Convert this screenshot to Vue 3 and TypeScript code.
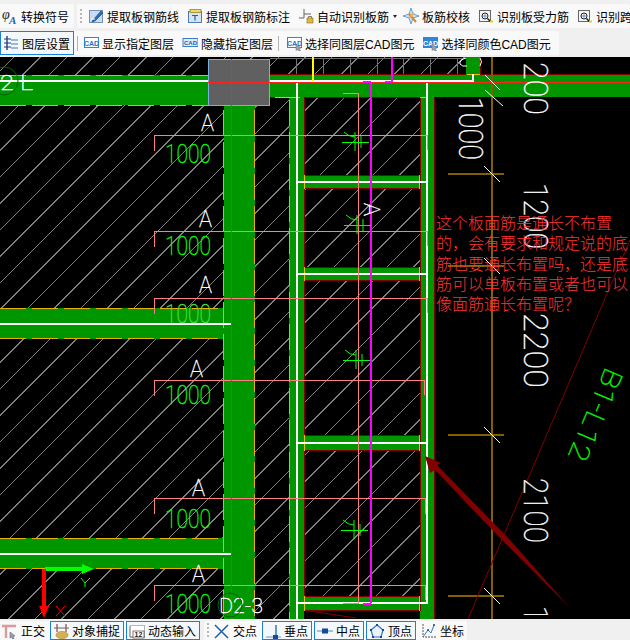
<script setup lang="ts">
interface ToolItem {
  icon: string
  label: string
  active?: boolean
  caret?: boolean
}

const cadBox = (fill: string, color: string) =>
  `<rect x="1.5" y="2.5" width="14" height="10" fill="${fill}" stroke="#2f86d8"/><text x="8.5" y="10.5" text-anchor="middle" font-size="7" font-weight="700" font-family="Liberation Sans" fill="${color}">CAD</text>`
const cursor = '<path d="M10 9l5 4-2 .5 1.5 2.5-1.5.7-1.2-2.5-1.8 1.3z" fill="#9aa4b2" stroke="#667"  stroke-width=".5"/>'
const lens =
  '<rect x="1.5" y="2.5" width="11" height="11" fill="#f4f4f4" stroke="#666"/><circle cx="7" cy="8" r="3" fill="#fff" stroke="#222"/><path d="M9.5 10.5l3 3" stroke="#222" stroke-width="1.5"/><path d="M7 5v6M4 8h6" stroke="#3a6ea8" stroke-width=".7"/><path d="M12 13.5h3" stroke="#e8d020" stroke-width="2"/>'

const icons: Record<string, string> = {
  symbol:
    '<text x="0" y="11" font-size="14" font-style="italic" font-family="Liberation Serif" fill="#222">φ</text><text x="7" y="15.5" font-size="11" font-weight="700" font-style="italic" font-family="Liberation Serif" fill="#2a62b8">A</text>',
  line: '<rect x="1.5" y="2.5" width="13" height="12" fill="#c9dcf0" stroke="#6f93bb"/><path d="M5 12l8-9 2 2-8 8-3 1z" fill="#2c6db5" stroke="#163f78" stroke-width=".6"/><path d="M3 11h4" stroke="#fff"/>',
  label:
    '<rect x="1.5" y="3.5" width="13" height="11" fill="#d6e4f3" stroke="#4c7bb0"/><rect x="3" y="1.5" width="11" height="3" fill="#f0d860" stroke="#8a7a20" stroke-width=".7"/><path d="M5 7.5h6M8 7.5v5" stroke="#2c5f9e" stroke-width="1.2"/>',
  auto: '<path d="M6 1v9H1M6 6h7" fill="none" stroke="#666"/><rect x="9" y="10" width="6" height="5" fill="#e0b840" stroke="#8a6a10" stroke-width=".6"/><path d="M10.5 10V8.5h3V10" fill="none" stroke="#777"/>',
  check:
    '<path d="M8 0l2 6 6 2-6 2-2 6-2-6-6-2 6-2z" fill="#cfe2f6" stroke="#3f7fc4" stroke-width=".7"/><path d="M6 6l7 8" stroke="#d88a20" stroke-width="2"/><path d="M11 5l-5 5" stroke="#e8b050" stroke-width="2"/>',
  lens,
  layer:
    '<path d="M4 1v14" stroke="#1f3f7a" stroke-width="1.4"/><path d="M1 4h7M1 8h7M1 12h7" stroke="#1f3f7a" stroke-width="1.2"/><path d="M8 5h7M8 9h7M8 13h7" stroke="#3a78c8"/>',
  cadShow: cadBox('#fff', '#2376c8'),
  cadHide:
    '<rect x="1" y="3.5" width="15" height="8" fill="#dfe9f5" stroke="#3d7fc2"/><text x="8.5" y="10" text-anchor="middle" font-size="6" font-weight="700" font-family="Liberation Sans" fill="#2a5f9f">CAD</text>',
  cadPick: cadBox('#fff', '#2376c8') + cursor,
  cadColor: cadBox('#2f86d8', '#fff') + cursor,
  ortho:
    '<path d="M1 3h14M5 3v12" stroke="#d89a9a" stroke-width="2.4" fill="none"/><path d="M9 9l5 4-2 .5 1 2.2-1.4.4-1-2.2-1.6 1.2z" fill="#9aa4b2" stroke="#556" stroke-width=".5"/>',
  snap: '<path d="M4 1v8M13 1v8" stroke="#a04040" stroke-width="1.2"/><path d="M1 5h15" stroke="#666"/><ellipse cx="9" cy="12" rx="6" ry="3.6" fill="#d8b050" stroke="#a88020" stroke-width=".6"/>',
  dyn: '<path d="M1 3h15M1 6h15" stroke="#b06060"/><path d="M1 3v11h15V3" fill="#fff" stroke="#666"/><rect x="4" y="8" width="11" height="7" fill="#fff" stroke="#444" stroke-width=".7"/><text x="9.5" y="14" text-anchor="middle" font-size="7" font-family="Liberation Sans" font-weight="700" fill="#222">12</text>',
  cross: '<path d="M2 2l13 13M15 2L2 15" stroke="#1f5fb0" stroke-width="1.5"/>',
  perp: '<path d="M11 2v13" stroke="#2c6db5" stroke-width="1.4"/><path d="M1 14h15" stroke="#8fb0d8" stroke-width="1.4"/><rect x="8" y="12" width="5" height="4" fill="#174a96"/>',
  mid: '<path d="M0 8h16" stroke="#8fb0d8" stroke-width="1.6"/><rect x="5" y="5.5" width="6" height="5" fill="#174a96"/>',
  vertex:
    '<path d="M8 2l6 5-2 7H4L2 7z" fill="#eaf2fb" stroke="#3a72b8" stroke-width="1.2"/><path d="M7 1h2v2H7zM1 6h2v2H1zM13 6h2v2h-2zM3 13h2v2H3zM11 13h2v2h-2z" fill="#174a96"/>',
  coord:
    '<path d="M3 1v13h13" fill="none" stroke="#555" stroke-dasharray="2 1"/><path d="M3 14l5-7 3 3 3-8" fill="none" stroke="#3a78c8"/><circle cx="8" cy="7" r="1" fill="#174a96"/><circle cx="14" cy="2" r="1" fill="#174a96"/>'
}

const rowOneLead: ToolItem = { icon: 'symbol', label: '转换符号' }
const rowOne: ToolItem[] = [
  { icon: 'line', label: '提取板钢筋线' },
  { icon: 'label', label: '提取板钢筋标注' },
  { icon: 'auto', label: '自动识别板筋', caret: true },
  { icon: 'check', label: '板筋校核' },
  { icon: 'lens', label: '识别板受力筋' },
  { icon: 'lens', label: '识别跨板受力筋' }
]
const rowTwoA: ToolItem = { icon: 'layer', label: '图层设置', active: true }
const rowTwoB: ToolItem[] = [
  { icon: 'cadShow', label: '显示指定图层' },
  { icon: 'cadHide', label: '隐藏指定图层' }
]
const rowTwoC: ToolItem[] = [
  { icon: 'cadPick', label: '选择同图层CAD图元' },
  { icon: 'cadColor', label: '选择同颜色CAD图元' }
]
const statusA: ToolItem[] = [
  { icon: 'ortho', label: '正交' },
  { icon: 'snap', label: '对象捕捉', active: true },
  { icon: 'dyn', label: '动态输入', active: true }
]
const statusB: ToolItem[] = [
  { icon: 'cross', label: '交点' },
  { icon: 'perp', label: '垂点', active: true },
  { icon: 'mid', label: '中点', active: true },
  { icon: 'vertex', label: '顶点', active: true },
  { icon: 'coord', label: '坐标' }
]

// drawing data, coordinates are the same as the screen ones
const crossBeams = [
  { top: 175, white: 182, bottom: 189 },
  { top: 267, white: 274, bottom: 281 },
  { top: 435, white: 443, bottom: 451 },
  { top: 596, white: 603, bottom: 611 }
]
const leftBeams = [
  { top: 308, white: 324, bottom: 339 },
  { top: 538, white: 554, bottom: 569 }
]
const leaders = [
  { y: 135, right: 427, rightTick: 15 },
  { y: 231, right: 427, rightTick: 15 },
  { y: 298, right: 427, rightTick: 15 },
  { y: 380, right: 424, rightTick: 15 },
  { y: 498, right: 425, rightTick: 16 },
  { y: 585, right: 425, rightTick: 15 }
]
const marks = [
  { a: 201, y: 131, n: 163, light: false },
  { a: 199, y: 227, n: 255, light: false },
  { a: 199, y: 293, n: 323, light: true },
  { a: 190, y: 377, n: 404, light: false },
  { a: 192, y: 496, n: 528, light: false },
  { a: 192, y: 582, n: 613, light: false }
]
const rebars = [
  { x: 342, y: 142 },
  { x: 344, y: 225 },
  { x: 343, y: 360 },
  { x: 341, y: 530 }
]
const axisTicks = [174, 266, 435, 596]
const dims = [
  { text: '200', y: 62, len: 53 },
  { text: '1000', y: 97, len: 63, x: 459 },
  { text: '1200', y: 183, len: 66 },
  { text: '2200', y: 313, len: 75 },
  { text: '2100', y: 478, len: 65 },
  { text: '1', y: 606, len: 15 }
]
const note = [
  '这个板面筋是通长不布置',
  '的，会有要求和规定说的底',
  '筋也要通长布置吗，还是底',
  '筋可以单板布置或者也可以',
  '像面筋通长布置呢？'
]

// 45 degree hatch lines, clipped to the slab area in the template
let hatchPath = ''
for (let k = 18; k < 1200; k += 26.5) {
  hatchPath += `M0 ${k}L${k} 0`
}
</script>

<template>
  <div class="app">
    <div class="toolbar">
      <div class="group lead">
        <div class="item">
          <svg class="icon" viewBox="0 0 16 16" v-html="icons[rowOneLead.icon]"></svg>
          <span>{{ rowOneLead.label }}</span>
        </div>
      </div>
      <div class="group wide">
        <i class="grip"></i>
        <div v-for="it in rowOne" :key="it.label" class="item">
          <svg class="icon" viewBox="0 0 16 16" v-html="icons[it.icon]"></svg>
          <span>{{ it.label }}</span>
          <b v-if="it.caret" class="caret"></b>
        </div>
      </div>
    </div>

    <div class="toolbar second">
      <div class="group row-two">
        <div class="item on tight">
          <svg class="icon" viewBox="0 0 16 16" v-html="icons[rowTwoA.icon]"></svg>
          <span>{{ rowTwoA.label }}</span>
        </div>
        <i class="sep"></i>
        <div v-for="it in rowTwoB" :key="it.label" class="item">
          <svg class="icon" viewBox="0 0 16 16" v-html="icons[it.icon]"></svg>
          <span>{{ it.label }}</span>
        </div>
        <i class="sep wider"></i>
        <div v-for="it in rowTwoC" :key="it.label" class="item">
          <svg class="icon" viewBox="0 0 16 16" v-html="icons[it.icon]"></svg>
          <span>{{ it.label }}</span>
        </div>
      </div>
    </div>

    <div class="canvas">
      <svg class="cad" viewBox="0 57 630 562" width="630" height="562" shape-rendering="crispEdges">
        <defs>
          <clipPath id="slab">
            <rect x="0" y="57" width="434" height="562" />
            <rect x="434" y="57" width="32" height="18" />
          </clipPath>
        </defs>
        <rect x="0" y="57" width="630" height="562" fill="#000" />
        <path :d="hatchPath" clip-path="url(#slab)" stroke="#808080" fill="none" />
        <rect x="304" y="611" width="116" height="8" fill="#000" />

        <!-- grey column outlines in the top row -->
        <g fill="none" stroke="#707070">
          <path d="M270 58.5H466M296.5 58V75M323.5 58V75M350.5 58V75M377.5 58V75M403.5 58V75M430.5 58V75M457.5 58V75" />
        </g>

        <!-- beams -->
        <g fill="#009600">
          <rect x="0" y="75" width="208" height="30" />
          <rect x="270" y="75" width="360" height="22" />
          <rect x="224" y="105" width="31" height="514" />
          <rect x="289" y="97" width="15" height="522" />
          <rect x="420" y="97" width="14" height="522" />
          <rect x="466" y="57" width="14" height="18" />
          <rect v-for="b in crossBeams" :key="b.top" x="304" :y="b.top" width="116" :height="b.bottom - b.top" />
          <rect v-for="b in leftBeams" :key="b.top" x="0" :y="b.top" width="224" :height="b.bottom - b.top" />
        </g>

        <!-- dark red outlines -->
        <g fill="none" stroke="#800000">
          <path d="M254.5 59V74.5H466M480.5 57V74.5H630M270 97.5H289M304.5 97.5H420M304.5 97V611M420.5 97V611M434.5 97V619" />
          <path v-for="b in crossBeams" :key="b.top" :d="`M304 ${b.top + 0.5}H420M304 ${b.bottom - 0.5}H420`" />
          <path d="M310 611L356 618" shape-rendering="auto" />
        </g>

        <!-- orange dashed edges -->
        <g fill="none" stroke="#e8b000" stroke-dasharray="26 6">
          <path d="M0 75.5H208M0 105.5H208M223.5 110V619M254.5 110V619M289.5 100V619" />
          <path v-for="b in leftBeams" :key="b.top" :d="`M0 ${b.top + 0.5}H222M0 ${b.bottom - 0.5}H222`" />
        </g>
        <path d="M275 97.5H300M420 97.5H428M467 74.5H480" stroke="#e8c000" fill="none" />
        <g stroke="#e8c000" fill="none">
          <path v-for="b in crossBeams" :key="b.top" :d="`M304.5 ${b.top}V${b.bottom}M419.5 ${b.top}V${b.bottom}`" />
        </g>

        <!-- white centre lines -->
        <g fill="none" stroke="#fff" stroke-width="2">
          <path d="M0 81H208M270 81H474M473 74V82M297 83V619M427 83V604" />
          <path v-for="b in crossBeams" :key="b.top" :d="`M297 ${b.white}H427`" />
          <path v-for="b in leftBeams" :key="b.top" :d="`M0 ${b.white}H231`" />
        </g>
        <path d="M466 58Q459 60 460 64Q462 67 467 66M480 58Q483 61 480 66" fill="none" stroke="#fff" shape-rendering="auto" />

        <!-- pink leaders -->
        <g fill="none" stroke="#ff8080">
          <path d="M343 93.5H358.5V603.5M343 603.5H358" />
          <path v-for="l in leaders" :key="l.y" :d="`M154.5 ${l.y + 16}V${l.y + 0.5}H${l.right + 0.5}V${l.y + l.rightTick}`" />
        </g>

        <!-- grey column -->
        <rect x="208.5" y="59.5" width="61" height="46" fill="#606060" stroke="#7ab0e0" />
        <path d="M208 82H630M231.5 59V619" stroke="#ff2020" fill="none" />
        <path d="M312.5 57V81" stroke="#ffff00" stroke-width="2" />
        <path d="M392 57V82M371 82V603M363 81.5H371M385 81.5H392M363 603.5H371" stroke="#ff00ff" stroke-width="2" fill="none" />
        <path d="M505 81.5H521" stroke="#806000" />

        <!-- axis -->
        <path d="M491.5 57V619" stroke="#806000" stroke-width="2" />
        <g v-for="y in axisTicks" :key="y">
          <path :d="`M448 ${y}H504`" stroke="#806000" stroke-width="2" />
          <path :d="`M484 ${y - 8}L500 ${y + 8}`" stroke="#fff" shape-rendering="auto" />
        </g>
        <path d="M485 75L500 90M485 90L503 106" stroke="#fff" shape-rendering="auto" />
        <path d="M630 240L468 619" stroke="#800000" shape-rendering="auto" />

        <!-- rebar marks -->
        <g v-for="r in rebars" :key="r.y" :transform="`translate(${r.x},${r.y})`" fill="none" stroke="#00ff00" shape-rendering="auto">
          <path d="M0 .5H27M13 -10V9M19 -6V6M2 -10Q7 -5 13 -5" />
        </g>

        <!-- dimension and labels -->
        <g class="cad-text" shape-rendering="auto" stroke-width="0.4">
          <template v-for="m in marks" :key="m.y">
            <text :x="m.a" :y="m.y" font-size="24" fill="#fff" stroke="#fff" textLength="13" lengthAdjust="spacingAndGlyphs">A</text>
            <text x="165" :y="m.n" font-size="25" :fill="m.light ? '#40e040' : '#00ff00'" :stroke="m.light ? '#40e040' : '#00ff00'" textLength="46" lengthAdjust="spacingAndGlyphs">1000</text>
          </template>
          <text
            v-for="d in dims"
            :key="d.y"
            :transform="`translate(${d.x ?? 524},${d.y}) rotate(90)`"
            font-size="33"
            fill="#fff"
            stroke="#fff"
            :textLength="d.len"
            lengthAdjust="spacingAndGlyphs"
          >{{ d.text }}</text>
          <text transform="translate(364,203) rotate(90)" font-size="22" fill="#fff" stroke="#fff" textLength="13" lengthAdjust="spacingAndGlyphs">A</text>
          <text transform="translate(606,366) rotate(113)" font-size="27" fill="#00ff00" stroke="#00ff00" textLength="98" lengthAdjust="spacingAndGlyphs">B1-L12</text>
          <text x="219" y="613" font-size="21" fill="#fff" stroke="#fff" textLength="44" lengthAdjust="spacingAndGlyphs">D2-3</text>
          <text x="0" y="90" font-size="21" fill="#fff" stroke="#fff" textLength="33" lengthAdjust="spacingAndGlyphs">2 L</text>
        </g>
        <g fill="none" stroke="#006400" shape-rendering="auto">
          <circle cx="230" cy="605" r="12" />
          <circle cx="4" cy="81" r="14" />
        </g>

        <!-- arrow pointing to the beam -->
        <path d="M425 456L441 463 437 465 510 540 569 607 502 540 435 470 430 473Z" fill="#800000" shape-rendering="auto" />

        <!-- UCS icon -->
        <g shape-rendering="auto">
          <path d="M45 569H84" stroke="#00ff00" stroke-width="4" />
          <path d="M82 564L94 569 82 574Z" fill="#00ff00" />
          <path d="M44 569V608" stroke="#ff0000" stroke-width="4" />
          <path d="M39 606H49L44 618Z" fill="#ff0000" />
          <path d="M81 578L85 583 90 578M85 583V587" stroke="#00ff00" fill="none" />
          <path d="M56 606L65 616M65 606L56 616" stroke="#ff0000" fill="none" />
        </g>
      </svg>

      <div class="note">
        <p v-for="line in note" :key="line">{{ line }}</p>
      </div>
    </div>

    <div class="status">
      <div class="group">
        <div v-for="it in statusA" :key="it.label" class="item" :class="{ on: it.active }">
          <svg class="icon" viewBox="0 0 16 16" v-html="icons[it.icon]"></svg>
          <span>{{ it.label }}</span>
        </div>
      </div>
      <div class="group">
        <i class="grip"></i>
        <div v-for="it in statusB" :key="it.label" class="item" :class="{ on: it.active }">
          <svg class="icon" viewBox="0 0 16 16" v-html="icons[it.icon]"></svg>
          <span>{{ it.label }}</span>
        </div>
      </div>
    </div>
  </div>
</template>

<style>
html,
body {
  margin: 0;
  overflow: hidden;
}
</style>

<style scoped>
.app {
  width: 630px;
  height: 640px;
  display: flex;
  flex-direction: column;
  overflow: hidden;
  background: #f0f0f0;
  font-family: "Liberation Sans", "Noto Sans CJK SC", sans-serif;
  font-size: 12px;
  color: #000;
}
.toolbar {
  height: 28px;
  flex: none;
  display: flex;
  align-items: flex-end;
  gap: 3px;
  white-space: nowrap;
}
.toolbar.second {
  height: 29px;
  align-items: flex-start;
  padding-top: 3px;
  box-sizing: border-box;
}
.group {
  display: flex;
  align-items: center;
  background: #f9f9f9;
  height: 24px;
  border-radius: 2px;
}
.group.lead {
  width: 74px;
}
.group.wide {
  flex: 1;
  min-width: 0;
  overflow: hidden;
}
.group.row-two {
  padding-right: 4px;
}
.item {
  display: flex;
  align-items: center;
  gap: 3px;
  padding: 0 4px;
  height: 100%;
  box-sizing: border-box;
  flex: none;
}
.lead .item {
  padding: 0 0 0 2px;
}
.item.tight {
  padding: 0 3px 0 2px;
  margin-right: 2px;
}
.item.on {
  border: 1px solid #1a80d8;
  background: #f3f8fd;
}
.icon {
  width: 16px;
  height: 16px;
  flex: none;
}
.caret {
  width: 0;
  height: 0;
  margin: 0 -2px 0 1px;
  border-left: 2.5px solid transparent;
  border-right: 2.5px solid transparent;
  border-top: 3px solid #222;
}
.grip {
  width: 2px;
  height: 15px;
  margin: 0 2px 0 3px;
  flex: none;
  background: repeating-linear-gradient(#b8b8b8 0 2px, transparent 2px 4px);
}
.sep {
  width: 1px;
  height: 15px;
  margin: 0 1px;
  flex: none;
  background: #b4b4b4;
}
.sep.wider {
  margin-right: 3px;
}
.canvas {
  position: relative;
  height: 562px;
  flex: none;
  background: #000;
}
.cad {
  display: block;
}
.cad-text text {
  font-family: Roboto, "Liberation Sans", sans-serif;
  font-weight: 100;
}
.note {
  position: absolute;
  left: 436px;
  top: 155px;
  width: 194px;
  color: #ff3333;
  font-size: 16px;
  line-height: 20.3px;
  font-family: "Noto Sans CJK SC", sans-serif;
  font-weight: 300;
  white-space: nowrap;
}
.note p {
  margin: 0;
}
.status {
  height: 21px;
  flex: none;
  display: flex;
  align-items: flex-end;
  gap: 4px;
  white-space: nowrap;
}
.status .group {
  height: 19px;
}
.status .item {
  padding: 0 3px 0 1px;
  gap: 4px;
}
.status .item.on {
  padding: 0 3px 0 2px;
  gap: 3px;
  margin-left: 2px;
}
.status .item:last-child:not(.on) {
  padding-left: 4px;
}
.status .grip {
  margin-right: 3px;
}
</style>
